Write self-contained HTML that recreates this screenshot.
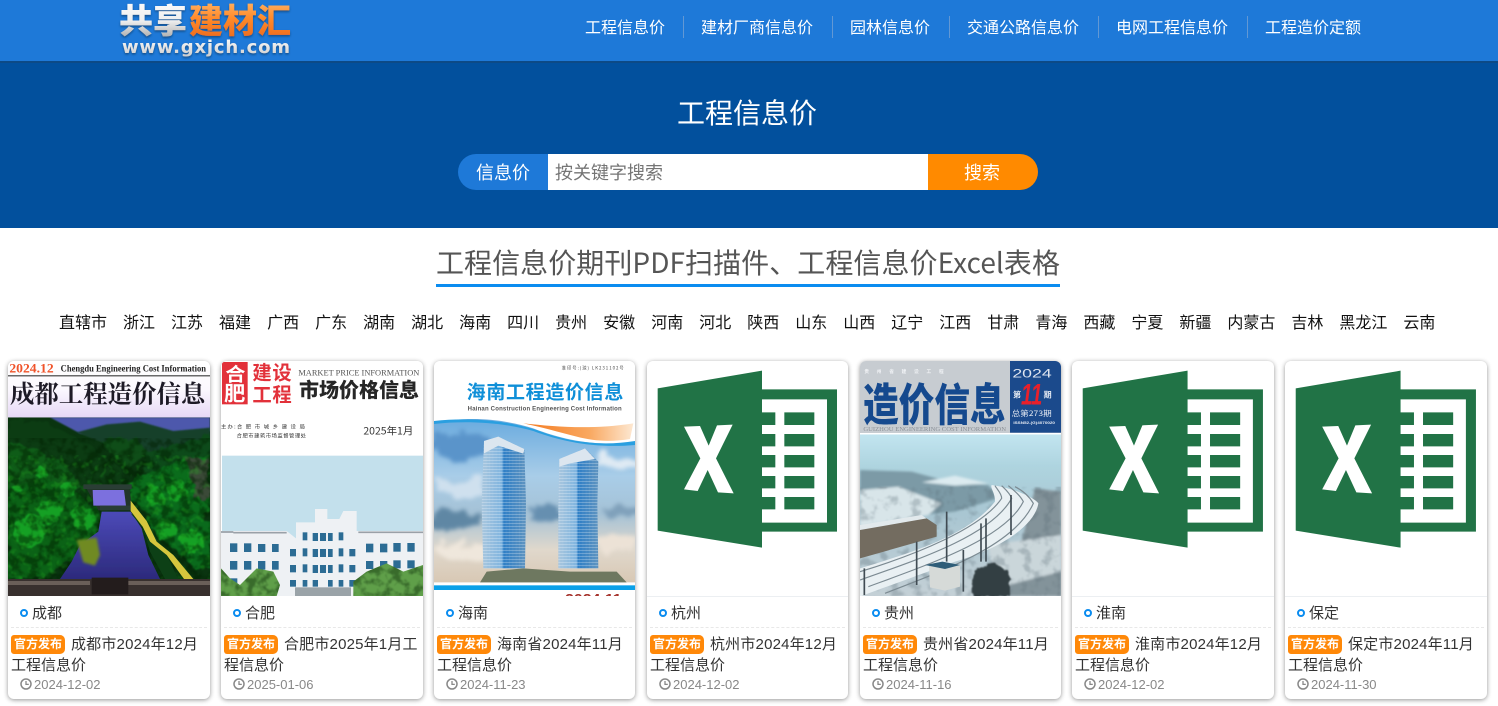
<!DOCTYPE html>
<html lang="zh-CN"><head><meta charset="utf-8"><title>工程信息价</title>
<style>
*{margin:0;padding:0;box-sizing:border-box}
html,body{width:1498px;height:706px;overflow:hidden;background:#fff}
body{position:relative;font-family:"Liberation Sans","Noto Sans CJK SC",sans-serif;color:#333}
.a{position:absolute;white-space:nowrap}
#hd{left:0;top:0;width:1498px;height:61px;background:#1e79d8}
#hero{left:0;top:61px;width:1498px;height:167px;background:#02509d;border-top:2px solid #0d4a86}
.n{position:absolute;top:18px;font-size:16px;line-height:22px;color:#fff}
.s{position:absolute;top:16px;width:1px;height:22px;background:#6298d4}
.prov{left:59px;top:313px;font-size:16px;line-height:22px;color:#111;display:flex;gap:16px}
.card{position:absolute;top:361px;height:338px;background:#fff;border-radius:6px;box-shadow:0 1px 5px rgba(0,0,0,.42);overflow:hidden}
.card svg.c{position:absolute;left:0;top:0;width:100%;height:235px;display:block}
.card .sep{position:absolute;left:0;right:0;top:235px;height:1px;background:#eceff2}
.ring{position:absolute;left:12px;top:248px;width:8px;height:8px;border:2px solid #0a8cf0;border-radius:50%}
.loc{position:absolute;left:24px;top:243px;font-size:15px;line-height:20px;color:#333}
.dash{position:absolute;left:3px;right:3px;top:266px;border-top:1px dashed #e8e8e8}
.tt{position:absolute;left:3px;top:272px;width:200px;font-size:15px;line-height:21px;color:#333;white-space:nowrap}
.tt b{font-weight:normal;position:relative;top:1px;letter-spacing:.18px}
.bd{display:inline-block;width:54px;height:19px;line-height:19px;background:#ff8808;color:#fff;font-size:12px;font-weight:bold;text-align:center;border-radius:3px 5px 5px 3px;margin-right:6px;vertical-align:-1px;position:relative;top:-1px}
.ck{position:absolute;left:12px;top:317px;width:12px;height:12px}
.dt{position:absolute;left:26px;top:316px;font-size:13px;line-height:16px;color:#888}
</style></head><body>

<svg class="a" style="left:0;top:0;width:0;height:0" width="0" height="0">
<defs>
<filter id="fo" x="-10%" y="-10%" width="120%" height="120%" color-interpolation-filters="sRGB"><feTurbulence type="fractalNoise" baseFrequency=".03" numOctaves="3" seed="4" result="n"/><feDisplacementMap in="SourceGraphic" in2="n" scale="32" xChannelSelector="R" yChannelSelector="G"/><feGaussianBlur stdDeviation="2"/></filter>
<filter id="cl" x="-20%" y="-30%" width="140%" height="160%" color-interpolation-filters="sRGB"><feTurbulence type="fractalNoise" baseFrequency=".018" numOctaves="3" seed="9" result="n"/><feDisplacementMap in="SourceGraphic" in2="n" scale="70" xChannelSelector="R" yChannelSelector="G"/><feGaussianBlur stdDeviation="6"/></filter>
<filter id="mot" x="0" y="0" width="100%" height="100%" color-interpolation-filters="sRGB"><feTurbulence type="fractalNoise" baseFrequency=".035" numOctaves="3" seed="7"/><feColorMatrix type="matrix" values="0 0 0 0 0  0 0 0 0 .12  0 0 0 0 0  4.5 0 0 0 -1.9"/><feGaussianBlur stdDeviation="1.5"/></filter>
<filter id="mob" x="0" y="0" width="100%" height="100%" color-interpolation-filters="sRGB"><feTurbulence type="fractalNoise" baseFrequency=".05" numOctaves="2" seed="21"/><feColorMatrix type="matrix" values="0 0 0 0 .16  0 0 0 0 .72  0 0 0 0 .14  5 0 0 0 -2.7"/><feGaussianBlur stdDeviation="1.5"/></filter>
<filter id="mos" x="0" y="0" width="100%" height="100%" color-interpolation-filters="sRGB"><feTurbulence type="fractalNoise" baseFrequency=".03" numOctaves="3" seed="13"/><feColorMatrix type="matrix" values="0 0 0 0 .35  0 0 0 0 .42  0 0 0 0 .46  5 0 0 0 -2.5"/><feGaussianBlur stdDeviation="2"/></filter>
<filter id="b1"><feGaussianBlur stdDeviation="4"/></filter>
<filter id="b2"><feGaussianBlur stdDeviation="2"/></filter>
<filter id="b0"><feGaussianBlur stdDeviation=".8"/></filter>
<clipPath id="cp1"><rect x="24" y="187" width="606" height="536"/></clipPath>
<clipPath id="cp2"><rect x="663" y="302" width="606" height="421"/></clipPath>
<clipPath id="cp2t"><path d="M663 723V640L690 670L720 690L770 640L820 650L840 690L830 723ZM1060 723V680L1100 650L1160 625L1210 650L1269 630V723Z"/></clipPath>
<pattern id="win" width="10" height="9" patternUnits="userSpaceOnUse"><rect width="10" height="2.5" y="0" fill="#fff" opacity=".3"/><rect x="8" width="1" height="9" fill="#fff" opacity=".12"/></pattern>
</defs>
</svg>

<div class="a" id="hd"></div>
<div class="a" id="hero"></div>

<svg class="a" style="left:115px;top:0" width="185" height="60" viewBox="0 0 185 60">
<defs>
<linearGradient id="lg1" x1="0" y1="0" x2="0" y2="1"><stop offset="0" stop-color="#fff"/><stop offset=".55" stop-color="#eee"/><stop offset="1" stop-color="#9a9a9a"/></linearGradient>
<linearGradient id="lg2" x1="0" y1="0" x2="0" y2="1"><stop offset="0" stop-color="#ffc27a"/><stop offset=".5" stop-color="#ff8a2a"/><stop offset="1" stop-color="#e8641a"/></linearGradient>
<linearGradient id="lg3" x1="0" y1="0" x2="0" y2="1"><stop offset="0" stop-color="#fff"/><stop offset="1" stop-color="#c9c9c9"/></linearGradient>
<filter id="ls" x="-10%" y="-10%" width="120%" height="130%"><feDropShadow dx="0" dy="1.5" stdDeviation="1" flood-color="#123a66" flood-opacity=".7"/></filter>
</defs>
<g filter="url(#ls)" font-family="'Noto Sans CJK SC',sans-serif" font-weight="900">
<text x="4" y="33" font-size="34" fill="url(#lg1)" textLength="68" lengthAdjust="spacingAndGlyphs">共享</text>
<text x="74" y="33" font-size="34" fill="url(#lg2)" textLength="102" lengthAdjust="spacingAndGlyphs">建材汇</text>
</g>
<text x="7" y="53" font-family="'DejaVu Sans',sans-serif" font-weight="bold" font-size="18" fill="url(#lg3)" filter="url(#ls)" textLength="168">www.gxjch.com</text>
</svg>

<div class="n" style="left:585px">工程信息价</div><div class="s" style="left:683px"></div>
<div class="n" style="left:701px">建材厂商信息价</div><div class="s" style="left:832px"></div>
<div class="n" style="left:850px">园林信息价</div><div class="s" style="left:949px"></div>
<div class="n" style="left:967px">交通公路信息价</div><div class="s" style="left:1098px"></div>
<div class="n" style="left:1116px">电网工程信息价</div><div class="s" style="left:1247px"></div>
<div class="n" style="left:1265px">工程造价定额</div>

<div class="a" style="left:677px;top:94px;font-size:28px;line-height:40px;color:#fff">工程信息价</div>

<div class="a" style="left:458px;top:154px;width:90px;height:36px;background:#1e79d8;border-radius:18px 0 0 18px;color:#fff;font-size:18px;line-height:39px;padding-left:18px">信息价</div>
<div class="a" style="left:548px;top:154px;width:380px;height:36px;background:#fff;color:#757575;font-size:18px;line-height:39px;padding-left:7px">按关键字搜索</div>
<div class="a" style="left:928px;top:154px;width:110px;height:36px;background:#ff8a00;border-radius:0 18px 18px 0;color:#fff;font-size:18px;line-height:39px;text-align:center;padding-right:2px">搜索</div>

<div class="a" style="left:436px;top:241px;width:624px;height:46px;border-bottom:3px solid #0a8cf0;font-size:28px;line-height:42px;color:#555;font-family:'Noto Sans CJK SC','Liberation Sans',sans-serif;letter-spacing:.06px">工程信息价期刊PDF扫描件、工程信息价Excel表格</div>

<div class="a prov"><span>直辖市</span><span>浙江</span><span>江苏</span><span>福建</span><span>广西</span><span>广东</span><span>湖南</span><span>湖北</span><span>海南</span><span>四川</span><span>贵州</span><span>安徽</span><span>河南</span><span>河北</span><span>陕西</span><span>山东</span><span>山西</span><span>辽宁</span><span>江西</span><span>甘肃</span><span>青海</span><span>西藏</span><span>宁夏</span><span>新疆</span><span>内蒙古</span><span>吉林</span><span>黑龙江</span><span>云南</span></div>

<!-- card 1 -->
<div class="card" style="left:8px;width:202px">
<svg class="c" viewBox="24 18 606 705" preserveAspectRatio="none">
<defs>
<linearGradient id="c1a" x1="0" y1="0" x2="0" y2="1"><stop offset="0" stop-color="#fff"/><stop offset=".5" stop-color="#fbf8fe"/><stop offset="1" stop-color="#e6d8f6"/></linearGradient>
<linearGradient id="c1r" x1="0" y1="0" x2="0" y2="1"><stop offset="0" stop-color="#4c4ab8"/><stop offset="1" stop-color="#2c2a7c"/></linearGradient>
</defs>
<rect x="24" y="18" width="606" height="170" fill="url(#c1a)"/>
<text x="28" y="52" font-family="'Liberation Serif',serif" font-weight="bold" font-size="38" fill="#f0532a" textLength="133" lengthAdjust="spacingAndGlyphs">2024.12</text>
<text x="182" y="49" font-family="'Liberation Serif',serif" font-weight="bold" font-size="29" fill="#222" textLength="436" lengthAdjust="spacingAndGlyphs">Chengdu Engineering Cost Information</text>
<rect x="24" y="61" width="606" height="3" fill="#222"/>
<text x="30" y="143" font-family="'Noto Serif CJK SC',serif" font-weight="700" font-size="73" fill="#1d1a26" textLength="586" lengthAdjust="spacingAndGlyphs">成都工程造价信息</text>
<g clip-path="url(#cp1)">
<rect x="24" y="187" width="606" height="536" fill="#0a3410"/>
<path d="M150 187H630V228L500 250L240 235Z" fill="#4d58ac" filter="url(#b2)"/>
<path d="M230 232L320 208L420 200L520 228L630 218V300L440 300L300 260Z" fill="#12402c" filter="url(#b2)"/>
<g filter="url(#fo)">
<path d="M24 195L130 198L260 265L360 340L370 400L24 470Z" fill="#0c3c13"/>
<path d="M24 260L110 285L200 335L240 400L24 420Z" fill="#0f5c18"/>
<path d="M300 258L410 250L450 300L380 340Z" fill="#0f4d18"/>
<path d="M440 290L630 240V340L430 350Z" fill="#0d4a1a"/>
<path d="M380 380L470 340L620 300L630 470L470 500L400 440Z" fill="#0b6c1c"/>
<path d="M24 400L130 365L230 410L300 470L290 540L210 620L130 670H24Z" fill="#0b6216"/>
<path d="M430 500L530 440L630 500V640L590 650L510 570Z" fill="#0a6a1c"/>
<path d="M560 310H630V430H585Z" fill="#3b4a38"/>
<g fill="#15a024">
<circle cx="250" cy="490" r="36"/><circle cx="150" cy="470" r="36"/><circle cx="90" cy="530" r="48"/><circle cx="530" cy="405" r="32"/><circle cx="465" cy="425" r="30"/><circle cx="575" cy="560" r="34"/><circle cx="500" cy="525" r="30"/><circle cx="205" cy="405" r="24"/><circle cx="125" cy="355" r="18"/><circle cx="50" cy="400" r="16"/>
</g>
</g>
<rect x="24" y="250" width="606" height="425" filter="url(#mot)" opacity=".5"/>
<rect x="24" y="300" width="606" height="375" filter="url(#mob)" opacity=".3"/>
<path d="M255 392H388L396 466H295Z" fill="#23342a" filter="url(#b0)"/>
<path d="M278 405H372L378 452H280Z" fill="#7c70de" filter="url(#b0)"/>
<path d="M250 388H395V402H250ZM300 452H392V466H300Z" fill="#2c3c36" filter="url(#b0)"/>
<path d="M305 470H392L425 520L445 600L480 672H180L215 620L240 570L295 530Z" fill="url(#c1r)" filter="url(#b0)"/>
<path d="M392 475L430 520L450 590L495 672H535L500 600L445 510Z" fill="#0c3f18" filter="url(#b0)"/>
<path d="M392 437L440 498L470 560L520 600L580 672H552L500 600L450 560L428 515L392 468Z" fill="#d6c63e" filter="url(#b0)"/>
<path d="M230 555L290 548L300 600L285 632L250 622Z" fill="#6f8a24" filter="url(#b1)"/>
<rect x="24" y="672" width="606" height="51" fill="#38302e"/>
<path d="M24 684H270M380 684H630" stroke="#6a5f59" stroke-width="12"/>
<path d="M275 668H385V718H275Z" fill="#231c1c"/>
</g>
</svg>
<div class="ring"></div><div class="loc">成都</div><div class="dash"></div>
<div class="tt"><span class="bd">官方发布</span><b>成都市2024年12月</b><br>工程信息价</div>
<svg class="ck" viewBox="0 0 12 12"><circle cx="6" cy="6" r="5" fill="none" stroke="#888" stroke-width="1.5"/><path d="M6 3V6.4H8.8" fill="none" stroke="#888" stroke-width="1.3"/></svg>
<div class="dt">2024-12-02</div>
</div>

<!-- card 2 -->
<div class="card" style="left:221px;width:202px">
<svg class="c" viewBox="663 18 606 705" preserveAspectRatio="none">
<rect x="663" y="18" width="606" height="705" fill="#fff"/>
<rect x="666" y="21" width="77" height="127" fill="#e2313a"/>
<g font-family="'Noto Sans CJK SC',sans-serif" font-weight="bold">
<text x="676" y="78" font-size="56" fill="#fff" textLength="60" lengthAdjust="spacingAndGlyphs">合</text>
<text x="672" y="136" font-size="60" fill="#fff" textLength="64" lengthAdjust="spacingAndGlyphs">肥</text>
<text x="757" y="73" font-size="58" fill="#e2313a" textLength="118">建设</text>
<text x="757" y="140" font-size="58" fill="#e2313a" textLength="118">工程</text>
<text x="897" y="126" font-size="60" font-weight="900" fill="#262626" textLength="360">市场价格信息</text>
</g>
<text x="895" y="61" font-family="'Liberation Serif',serif" font-size="26" fill="#555" textLength="363" lengthAdjust="spacingAndGlyphs">MARKET PRICE INFORMATION</text>
<text x="663" y="220" font-family="'Noto Sans CJK SC',sans-serif" font-size="16" fill="#333" textLength="252">主办:合 肥 市 城 乡 建 设 局</text>
<text x="710" y="247" font-family="'Noto Sans CJK SC',sans-serif" font-size="16" fill="#333" textLength="208">合肥市建筑市场监督管理处</text>
<text x="1090" y="239" font-family="'Noto Sans CJK SC',sans-serif" font-size="30" fill="#333" textLength="150" lengthAdjust="spacingAndGlyphs">2025年1月</text>
<rect x="666" y="302" width="603" height="421" fill="#c3e0ec"/>
<path d="M945 492V462H982V492H1018L1030 468H1070V528H1269V723H663V528H860L888 550V502H945Z" fill="#eef1f4"/>
<path d="M663 531H700M700 533H860M1075 532H1269" stroke="#9aa1a8" stroke-width="5"/>
<g fill="#2c6c94">
<rect x="690" y="565" width="22" height="26"/><rect x="732" y="565" width="22" height="26"/><rect x="774" y="567" width="22" height="24"/><rect x="816" y="567" width="20" height="24"/>
<rect x="690" y="618" width="22" height="26"/><rect x="732" y="618" width="22" height="26"/><rect x="774" y="618" width="22" height="26"/><rect x="816" y="618" width="20" height="26"/>
<rect x="908" y="532" width="14" height="24"/><rect x="938" y="534" width="16" height="24"/><rect x="960" y="534" width="18" height="24"/><rect x="984" y="534" width="14" height="24"/><rect x="1016" y="532" width="14" height="24"/>
<rect x="870" y="582" width="18" height="22"/><rect x="908" y="580" width="14" height="24"/><rect x="938" y="582" width="16" height="24"/><rect x="960" y="582" width="18" height="24"/><rect x="984" y="582" width="14" height="24"/><rect x="1016" y="580" width="14" height="24"/><rect x="1048" y="582" width="18" height="22"/>
<rect x="870" y="630" width="18" height="22"/><rect x="908" y="628" width="14" height="24"/><rect x="938" y="630" width="16" height="24"/><rect x="960" y="630" width="18" height="24"/><rect x="984" y="630" width="14" height="24"/><rect x="1016" y="628" width="14" height="24"/><rect x="1048" y="630" width="18" height="22"/>
<rect x="870" y="675" width="18" height="20"/><rect x="908" y="675" width="14" height="20"/><rect x="938" y="675" width="16" height="20"/><rect x="984" y="675" width="14" height="20"/><rect x="1016" y="675" width="14" height="20"/><rect x="1048" y="675" width="18" height="20"/>
<rect x="1098" y="566" width="22" height="26"/><rect x="1140" y="566" width="22" height="26"/><rect x="1180" y="564" width="22" height="26"/><rect x="1222" y="564" width="22" height="26"/>
<rect x="1098" y="618" width="22" height="24"/><rect x="1140" y="618" width="22" height="24"/><rect x="1180" y="616" width="22" height="24"/><rect x="1222" y="616" width="22" height="24"/>
<rect x="690" y="670" width="22" height="22"/>
</g>
<rect x="885" y="697" width="168" height="26" fill="#9aa3a8"/>
<g clip-path="url(#cp2)"><g filter="url(#b0)">
<path d="M663 723V640L690 670L720 690L770 640L820 650L840 690L830 723Z" fill="#5f9f48"/>
<path d="M1060 723V680L1100 650L1160 625L1210 650L1269 630V723Z" fill="#5f9f48"/>
</g>
<g clip-path="url(#cp2t)"><rect x="663" y="620" width="606" height="103" filter="url(#mot)" opacity=".4"/></g></g>
</svg>
<div class="ring"></div><div class="loc">合肥</div><div class="dash"></div>
<div class="tt"><span class="bd">官方发布</span><b>合肥市2025年1月工</b><br>程信息价</div>
<svg class="ck" viewBox="0 0 12 12"><circle cx="6" cy="6" r="5" fill="none" stroke="#888" stroke-width="1.5"/><path d="M6 3V6.4H8.8" fill="none" stroke="#888" stroke-width="1.3"/></svg>
<div class="dt">2025-01-06</div>
</div>

<!-- card 3 -->
<div class="card" style="left:434px;width:201px">
<svg class="c" viewBox="12 18 603 705" preserveAspectRatio="none">
<defs>
<linearGradient id="c3s" x1="0" y1="0" x2="0" y2="1"><stop offset="0" stop-color="#6aabdf"/><stop offset=".35" stop-color="#a9cde8"/><stop offset=".58" stop-color="#a5c2d6"/><stop offset=".8" stop-color="#e0d8cc"/><stop offset="1" stop-color="#d8c8b4"/></linearGradient>
<linearGradient id="c3t" x1="0" y1="0" x2="1" y2="0"><stop offset="0" stop-color="#a8c6de"/><stop offset=".45" stop-color="#7fb4df"/><stop offset=".5" stop-color="#2f7fc6"/><stop offset="1" stop-color="#5e93bf"/></linearGradient>
<linearGradient id="c3o" x1="0" y1="0" x2="1" y2="0"><stop offset="0" stop-color="#f47a20"/><stop offset=".6" stop-color="#f9a860"/><stop offset="1" stop-color="#fde8d2"/></linearGradient>
<clipPath id="cp3"><rect x="12" y="18" width="603" height="705"/></clipPath>
</defs>
<rect x="12" y="18" width="603" height="705" fill="#fff"/>
<text x="395" y="44" font-family="'Noto Sans CJK SC',sans-serif" font-size="13" fill="#444" textLength="186">准印号:(琼) LK231102号</text>
<text x="110" y="130" font-family="'Noto Sans CJK SC',sans-serif" font-weight="bold" font-size="57" fill="#0f8fd8" textLength="470">海南工程造价信息</text>
<text x="113" y="166" font-family="'Liberation Sans',sans-serif" font-weight="bold" font-size="18" fill="#555" textLength="462">Hainan  Construction  Engineering  Cost  Information</text>
<g clip-path="url(#cp3)">
<path d="M12 205C120 180 230 195 310 220C400 255 500 275 615 262V682H12Z" fill="url(#c3s)"/>
<g filter="url(#cl)">
<ellipse cx="90" cy="270" rx="100" ry="38" fill="#5a94ca"/>
<ellipse cx="560" cy="320" rx="70" ry="25" fill="#dfeaf3"/>
<ellipse cx="80" cy="500" rx="85" ry="30" fill="#5f87a4"/>
<ellipse cx="340" cy="475" rx="55" ry="25" fill="#668fb0"/>
<ellipse cx="570" cy="470" rx="50" ry="20" fill="#7fa0ba"/>
<ellipse cx="90" cy="400" rx="70" ry="25" fill="#cfe0ee"/>
<ellipse cx="100" cy="590" rx="90" ry="30" fill="#efe7dc"/>
<ellipse cx="560" cy="560" rx="70" ry="30" fill="#ece2d6"/>
</g>
</g>
<path d="M12 198C130 185 240 200 320 225C410 260 510 275 615 258V270C500 280 400 262 310 228C230 205 120 195 12 207Z" fill="#2a9fe0"/>
<path d="M280 205C380 215 480 225 610 205L600 252C540 262 490 258 440 245C390 232 330 215 280 205Z" fill="url(#c3o)"/>
<path d="M162 258L205 245L283 282L288 445L285 640L160 640L155 450Z" fill="url(#c3t)"/>
<path d="M162 258L205 245L283 282L288 445L285 640L160 640L155 450Z" fill="url(#win)"/>
<path d="M162 258L205 245L283 282L280 296L205 272L162 295Z" fill="#dce6ef"/>
<path d="M388 312L465 280L505 320L502 450L505 640H385V450Z" fill="url(#c3t)"/>
<path d="M388 312L465 280L505 320L502 450L505 640H385V450Z" fill="url(#win)"/>
<path d="M388 312L465 280L495 312L420 325L388 335Z" fill="#dce6ef"/>
<path d="M150 682L170 650L280 640L420 650L560 650L590 682Z" fill="#6e7860" filter="url(#b0)"/>
<rect x="12" y="691" width="603" height="14" fill="#0aa0e8"/>
<text x="405" y="746" font-family="'Liberation Sans',sans-serif" font-weight="bold" font-size="42" fill="#a5312a" textLength="170" lengthAdjust="spacingAndGlyphs">2024 11</text>
</svg>
<div class="ring"></div><div class="loc">海南</div><div class="dash"></div>
<div class="tt"><span class="bd">官方发布</span><b>海南省2024年11月</b><br>工程信息价</div>
<svg class="ck" viewBox="0 0 12 12"><circle cx="6" cy="6" r="5" fill="none" stroke="#888" stroke-width="1.5"/><path d="M6 3V6.4H8.8" fill="none" stroke="#888" stroke-width="1.3"/></svg>
<div class="dt">2024-11-23</div>
</div>

<!-- card 4 -->
<div class="card" style="left:647px;width:201px">
<svg class="c" viewBox="651 18 603 705" preserveAspectRatio="none">
<path d="M683 100L996 47V103H1221V530H996V578L683 527Z" fill="#217346"/>
<path d="M996 133H1191V503H996V463H1036V426H996V400H1036V363H996V337H1036V300H996V274H1036V237H996V210H1036V172H996Z" fill="#fff"/>
<path d="M1063 172H1153V210H1063ZM1063 237H1153V274H1063ZM1063 300H1153V337H1063ZM1063 363H1153V400H1063ZM1063 426H1153V463H1063Z" fill="#217346"/>
<path d="M762 215L810 213L836 272L861 211L908 209L858 310L911 415L864 412L833 345L803 408L762 403L811 310Z" fill="#fff"/>
</svg>
<div class="sep"></div>
<div class="ring"></div><div class="loc">杭州</div><div class="dash"></div>
<div class="tt"><span class="bd">官方发布</span><b>杭州市2024年12月</b><br>工程信息价</div>
<svg class="ck" viewBox="0 0 12 12"><circle cx="6" cy="6" r="5" fill="none" stroke="#888" stroke-width="1.5"/><path d="M6 3V6.4H8.8" fill="none" stroke="#888" stroke-width="1.3"/></svg>
<div class="dt">2024-12-02</div>
</div>

<!-- card 5 -->
<div class="card" style="left:860px;width:201px">
<svg class="c" viewBox="15 18 603 705" preserveAspectRatio="none">
<defs>
<linearGradient id="c5s" x1="0" y1="0" x2="0" y2="1"><stop offset="0" stop-color="#c2e5f0"/><stop offset=".2" stop-color="#aed4df"/><stop offset=".5" stop-color="#a9c6d2"/><stop offset="1" stop-color="#c4d0d6"/></linearGradient>
<clipPath id="cp5"><rect x="15" y="238" width="603" height="485"/></clipPath>
</defs>
<rect x="15" y="18" width="603" height="216" fill="#c7ccd1"/>
<rect x="465" y="18" width="153" height="215" fill="#1b4a8c"/>
<text x="28" y="54" font-family="'Noto Sans CJK SC',sans-serif" font-weight="bold" font-size="14" fill="#f1f3f6" textLength="238">贵 州 省 建 设 工 程</text>
<text transform="translate(24 196) scale(1 1.24)" font-family="'Noto Sans CJK SC',sans-serif" font-weight="900" font-size="107" fill="#15498e" textLength="428" lengthAdjust="spacingAndGlyphs">造价信息</text>
<text x="25" y="228" font-family="'Liberation Serif',serif" font-size="19" fill="#8a8f96" textLength="428" lengthAdjust="spacingAndGlyphs">GUIZHOU ENGINEERING COST INFORMATION</text>
<text x="472" y="67" font-family="'Liberation Sans',sans-serif" font-size="37" fill="#dfe6f0" textLength="118" lengthAdjust="spacingAndGlyphs">2024</text>
<text x="474" y="127" font-family="'Noto Sans CJK SC',sans-serif" font-weight="bold" font-size="24" fill="#e6ebf3">第</text>
<text x="566" y="127" font-family="'Noto Sans CJK SC',sans-serif" font-weight="bold" font-size="24" fill="#e6ebf3">期</text>
<text x="498" y="148" font-family="'Liberation Sans',sans-serif" font-style="italic" font-weight="bold" font-size="88" fill="#e8202a" textLength="64" lengthAdjust="spacingAndGlyphs">11</text>
<text x="470" y="183" font-family="'Noto Sans CJK SC',sans-serif" font-size="22" fill="#e6ebf3" textLength="120" lengthAdjust="spacingAndGlyphs">总第273期</text>
<text x="475" y="207" font-family="'Liberation Sans',sans-serif" font-weight="bold" font-size="11" fill="#e6ebf3" textLength="125" lengthAdjust="spacingAndGlyphs">ISSN52-(G)4070020</text>
<g clip-path="url(#cp5)">
<rect x="15" y="238" width="603" height="485" fill="url(#c5s)"/>
<g filter="url(#b1)">
<path d="M15 345L170 350L300 385L400 390L430 430L300 470L15 500Z" fill="#7b9aa6"/>
<path d="M200 382L300 362L400 385L300 392Z" fill="#dcebf0"/>
<path d="M15 405L130 395L260 445L220 480L15 515Z" fill="#d8e5e9"/>
<path d="M540 400L618 410V723H400L500 560Z" fill="#83939a"/>
<path d="M400 570L618 540V650L420 700Z" fill="#cad6da"/>
</g>
<rect x="15" y="395" width="603" height="328" filter="url(#mos)" opacity=".3"/>
<path d="M15 510L200 480L240 510L15 570Z" fill="#e2e9ec" filter="url(#b0)"/>
<path d="M15 525L215 490L245 510V545L15 610Z" fill="#736c60" filter="url(#b0)"/>
<path d="M15 640C180 590 340 540 420 440C420 410 405 400 410 390C480 400 540 430 550 445C540 510 440 580 300 620C180 665 80 700 15 725Z" fill="#e9f0f3" filter="url(#b0)"/>
<g fill="none" stroke="#7b8a92" stroke-width="3.5" filter="url(#b0)">
<path d="M15 650C180 600 380 520 440 430C440 415 425 402 420 392"/>
<path d="M15 675C200 610 410 540 470 430C465 415 450 402 440 392"/>
<path d="M40 695C230 625 450 550 505 440C495 420 475 405 460 392"/>
<path d="M90 715C270 645 480 570 535 445C520 420 500 405 480 395"/>
</g>
<g stroke="#3f4b53" stroke-width="5" filter="url(#b0)"><path d="M185 560V690M275 470V620M325 585V710M378 505V620M393 490V620M468 420V540M28 640V720"/></g>
<path d="M222 632L262 622L315 632V695L270 707L225 697Z" fill="#d6dad8"/>
<path d="M210 630L262 620L315 630L270 642Z" fill="#2f5d78"/>
<path d="M350 723V650L400 625L465 640V723Z" fill="#333f43" filter="url(#fo)"/>
</g>
</svg>
<div class="ring"></div><div class="loc">贵州</div><div class="dash"></div>
<div class="tt"><span class="bd">官方发布</span><b>贵州省2024年11月</b><br>工程信息价</div>
<svg class="ck" viewBox="0 0 12 12"><circle cx="6" cy="6" r="5" fill="none" stroke="#888" stroke-width="1.5"/><path d="M6 3V6.4H8.8" fill="none" stroke="#888" stroke-width="1.3"/></svg>
<div class="dt">2024-11-16</div>
</div>

<!-- card 6 -->
<div class="card" style="left:1072px;width:202px">
<svg class="c" viewBox="651 18 603 705" preserveAspectRatio="none">
<path d="M683 100L996 47V103H1221V530H996V578L683 527Z" fill="#217346"/>
<path d="M996 133H1191V503H996V463H1036V426H996V400H1036V363H996V337H1036V300H996V274H1036V237H996V210H1036V172H996Z" fill="#fff"/>
<path d="M1063 172H1153V210H1063ZM1063 237H1153V274H1063ZM1063 300H1153V337H1063ZM1063 363H1153V400H1063ZM1063 426H1153V463H1063Z" fill="#217346"/>
<path d="M762 215L810 213L836 272L861 211L908 209L858 310L911 415L864 412L833 345L803 408L762 403L811 310Z" fill="#fff"/>
</svg>
<div class="sep"></div>
<div class="ring"></div><div class="loc">淮南</div><div class="dash"></div>
<div class="tt"><span class="bd">官方发布</span><b>淮南市2024年12月</b><br>工程信息价</div>
<svg class="ck" viewBox="0 0 12 12"><circle cx="6" cy="6" r="5" fill="none" stroke="#888" stroke-width="1.5"/><path d="M6 3V6.4H8.8" fill="none" stroke="#888" stroke-width="1.3"/></svg>
<div class="dt">2024-12-02</div>
</div>

<!-- card 7 -->
<div class="card" style="left:1285px;width:202px">
<svg class="c" viewBox="651 18 603 705" preserveAspectRatio="none">
<path d="M683 100L996 47V103H1221V530H996V578L683 527Z" fill="#217346"/>
<path d="M996 133H1191V503H996V463H1036V426H996V400H1036V363H996V337H1036V300H996V274H1036V237H996V210H1036V172H996Z" fill="#fff"/>
<path d="M1063 172H1153V210H1063ZM1063 237H1153V274H1063ZM1063 300H1153V337H1063ZM1063 363H1153V400H1063ZM1063 426H1153V463H1063Z" fill="#217346"/>
<path d="M762 215L810 213L836 272L861 211L908 209L858 310L911 415L864 412L833 345L803 408L762 403L811 310Z" fill="#fff"/>
</svg>
<div class="sep"></div>
<div class="ring"></div><div class="loc">保定</div><div class="dash"></div>
<div class="tt"><span class="bd">官方发布</span><b>保定市2024年11月</b><br>工程信息价</div>
<svg class="ck" viewBox="0 0 12 12"><circle cx="6" cy="6" r="5" fill="none" stroke="#888" stroke-width="1.5"/><path d="M6 3V6.4H8.8" fill="none" stroke="#888" stroke-width="1.3"/></svg>
<div class="dt">2024-11-30</div>
</div>

</body></html>
